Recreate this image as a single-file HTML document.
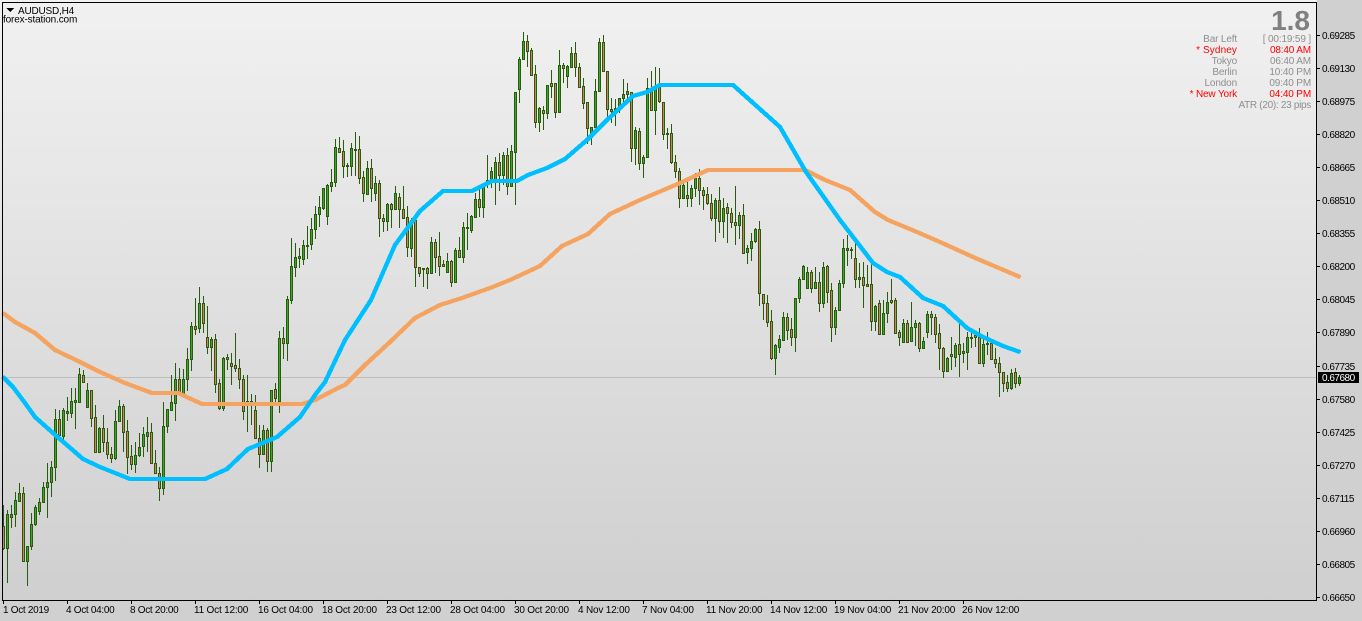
<!DOCTYPE html>
<html>
<head>
<meta charset="utf-8">
<style>
html,body{margin:0;padding:0;background:#d0d0d0;width:1362px;height:621px;overflow:hidden}
svg{display:block}
text{font-family:"Liberation Sans",sans-serif;font-size:10px}
.p{fill:#000;letter-spacing:-.5px}
.t{fill:#000;letter-spacing:-.2px}
.l{text-anchor:end;letter-spacing:-.15px}
.g{fill:#8e8e8e}
.r{fill:#ff0000}
</style>
</head>
<body>
<svg width="1362" height="621" viewBox="0 0 1362 621" xmlns="http://www.w3.org/2000/svg">
<defs>
<linearGradient id="bg" x1="0" y1="0" x2="0" y2="1">
<stop offset="0" stop-color="#f1f1f1"/>
<stop offset="1" stop-color="#cfcfcf"/>
</linearGradient>
<polyline id="oline" fill="none" stroke="#f4a460" stroke-width="3" points="3,313 15,322 35,333 55,350 80,362 100,372 125,383 152,393 178,393 202,404 302,404 315,400 340,387 345,385 365,365 390,342 415,318 440,305 462,298 490,288 510,280 540,266 562,246 588,234 610,214 640,200 680,183 708,170 805,170 825,180 850,190 875,212 888,220 917,232 940,242 973,257 1020,277"/>
<polyline id="bline" fill="none" stroke="#00bfff" stroke-width="3" points="3,377 13,387 25,403 35,417 53,433 83,459 100,467 130,479 205,479 227,469 248,449 277,437 300,417 315,395 325,382 345,340 371,300 395,245 420,211 443,191 472,191 492,181 517,181 528,175 547,168 565,159 587,140 607,120 633,96 647,92 660,85 733,85 780,127 806,172 840,220 873,263 887,272 900,277 923,298 943,306 967,328 983,337 1003,346 1020,352"/>
</defs>
<rect width="1362" height="621" fill="#d0d0d0"/>
<rect width="1317" height="601" fill="url(#bg)"/>
<rect x="3" y="377" width="1313" height="1" fill="#bdbdbd"/>

<g shape-rendering="crispEdges">
<path fill="none" stroke="#2a5a10" stroke-width="1" d="M3.5 505V550M7.5 510V583M11.5 505V528M15.5 492V527M19.5 483V502M23.5 487V562M27.5 546V586M31.5 513V550M35.5 505V526M39.5 498V515M43.5 482V503M47.5 463V518M51.5 461V497M55.5 409V481M59.5 410V440M63.5 408V444M67.5 397V421M71.5 388V418M75.5 388V429M79.5 368V402M83.5 370V383M87.5 383V407M91.5 390V427M95.5 405V453M99.5 427V453M103.5 415V452M107.5 428V459M111.5 447V463M115.5 410V460M119.5 400V422M123.5 404V452M127.5 420V474M131.5 445V470M135.5 442V473M139.5 433V457M143.5 427V457M147.5 417V452M151.5 423V463M155.5 450V473M159.5 467V501M163.5 402V495M167.5 409V433M171.5 375V410M175.5 363V421M179.5 368V395M183.5 369V395M187.5 348V391M191.5 322V371M195.5 298V335M199.5 287V333M203.5 296V333M207.5 306V354M211.5 337V371M215.5 334V393M219.5 379V410M223.5 357V411M227.5 354V370M231.5 353V385M235.5 333V372M239.5 359V389M243.5 375V420M247.5 375V432M251.5 394V425M255.5 395V438M259.5 425V468M263.5 425V455M267.5 428V472M271.5 390V472M275.5 383V403M279.5 331V413M283.5 327V359M287.5 296V361M291.5 238V304M295.5 243V277M299.5 248V268M303.5 240V265M307.5 226V259M311.5 218V250M315.5 206V239M319.5 196V227M323.5 188V210M327.5 184V225M331.5 169V192M335.5 139V187M339.5 137V152M343.5 140V178M347.5 163V177M351.5 143V176M355.5 132V176M359.5 136V184M363.5 171V202M367.5 161V195M371.5 159V202M375.5 176V201M379.5 180V237M383.5 214V232M387.5 203V231M391.5 203V228M395.5 186V210M399.5 193V228M403.5 186V218M407.5 206V257M411.5 218V257M415.5 218V287M419.5 267V277M423.5 268V287M427.5 267V289M431.5 237V273M435.5 239V273M439.5 232V276M443.5 260V266M447.5 253V273M451.5 260V287M455.5 248V282M459.5 237V257M463.5 222V263M467.5 213V250M471.5 215V233M475.5 193V217M479.5 188V217M483.5 183V218M487.5 155V188M491.5 167V188M495.5 157V205M499.5 153V191M503.5 152V185M507.5 148V195M511.5 145V186M515.5 92V205M519.5 57V103M523.5 32V59M527.5 35V67M531.5 48V76M535.5 65V128M539.5 107V132M543.5 106V130M547.5 85V119M551.5 70V98M555.5 83V118M559.5 50V112M563.5 63V83M567.5 65V88M571.5 47V67M575.5 42V77M579.5 63V88M583.5 78V109M587.5 102V144M591.5 127V145M595.5 79V127M599.5 38V91M603.5 35V71M607.5 71V120M611.5 98V123M615.5 99V126M619.5 98V113M623.5 79V102M627.5 83V100M631.5 92V162M635.5 127V165M639.5 128V170M643.5 155V178M647.5 78V157M651.5 71V110M655.5 67V135M659.5 68V103M663.5 102V140M667.5 128V149M671.5 124V164M675.5 155V178M679.5 168V208M683.5 182V199M687.5 182V207M691.5 185V207M695.5 173V197M699.5 169V205M703.5 187V210M707.5 187V205M711.5 194V221M715.5 198V242M719.5 187V233M723.5 198V238M727.5 203V243M731.5 208V228M735.5 186V245M739.5 212V239M743.5 204V254M747.5 245V264M751.5 233V261M755.5 228V243M759.5 221V306M763.5 294V320M767.5 295V327M771.5 310V360M775.5 344V375M779.5 335V353M783.5 312V341M787.5 313V340M791.5 318V346M795.5 298V352M799.5 277V303M803.5 265V280M807.5 267V289M811.5 270V293M815.5 267V289M819.5 272V312M823.5 262V308M827.5 265V303M831.5 283V342M835.5 307V335M839.5 280V311M843.5 239V288M847.5 235V266M851.5 247V259M855.5 240V288M859.5 263V288M863.5 262V308M867.5 265V286M871.5 263V331M875.5 305V331M879.5 300V335M883.5 300V335M887.5 292V323M891.5 279V304M895.5 298V333M899.5 330V346M903.5 319V342M907.5 320V343M911.5 302V342M915.5 320V346M919.5 322V352M923.5 337V349M927.5 311V338M931.5 311V335M935.5 314V343M939.5 324V370M943.5 347V378M947.5 357V372M951.5 337V370M955.5 343V367M959.5 323V377M963.5 343V363M967.5 332V370M971.5 328V348M975.5 332V347M979.5 328V363M983.5 337V367M987.5 332V355M991.5 342V360M995.5 348V368M999.5 357V397M1003.5 372V392M1007.5 375V392M1011.5 369V390M1015.5 368V388M1019.5 375V386"/>
<path fill="#3aa828" stroke="#2a5a10" stroke-width="1" d="M6.5 514.5h2V548.5h-2zM10.5 514.5h2V517.5h-2zM14.5 500.5h2V514.5h-2zM18.5 493.5h2V501.5h-2zM26.5 546.5h2V561.5h-2zM30.5 524.5h2V546.5h-2zM34.5 507.5h2V524.5h-2zM38.5 502.5h2V511.5h-2zM42.5 487.5h2V502.5h-2zM46.5 482.5h2V487.5h-2zM50.5 467.5h2V482.5h-2zM54.5 419.5h2V467.5h-2zM62.5 410.5h2V436.5h-2zM66.5 411.5h2V413.5h-2zM70.5 401.5h2V413.5h-2zM74.5 400.5h2V402.5h-2zM78.5 374.5h2V402.5h-2zM86.5 390.5h2V407.5h-2zM98.5 428.5h2V452.5h-2zM114.5 421.5h2V458.5h-2zM118.5 406.5h2V421.5h-2zM134.5 455.5h2V464.5h-2zM138.5 447.5h2V455.5h-2zM142.5 434.5h2V446.5h-2zM146.5 432.5h2V436.5h-2zM162.5 426.5h2V488.5h-2zM166.5 409.5h2V426.5h-2zM170.5 402.5h2V410.5h-2zM174.5 379.5h2V403.5h-2zM182.5 379.5h2V395.5h-2zM186.5 359.5h2V379.5h-2zM190.5 326.5h2V359.5h-2zM198.5 303.5h2V328.5h-2zM210.5 339.5h2V347.5h-2zM222.5 358.5h2V408.5h-2zM246.5 401.5h2V405.5h-2zM262.5 430.5h2V454.5h-2zM270.5 390.5h2V461.5h-2zM278.5 338.5h2V401.5h-2zM286.5 299.5h2V343.5h-2zM290.5 266.5h2V300.5h-2zM294.5 257.5h2V267.5h-2zM298.5 256.5h2V258.5h-2zM302.5 245.5h2V259.5h-2zM306.5 245.5h2V246.5h-2zM310.5 229.5h2V244.5h-2zM314.5 214.5h2V229.5h-2zM318.5 207.5h2V214.5h-2zM322.5 188.5h2V208.5h-2zM326.5 185.5h2V216.5h-2zM330.5 182.5h2V186.5h-2zM334.5 147.5h2V182.5h-2zM346.5 165.5h2V166.5h-2zM350.5 148.5h2V166.5h-2zM354.5 149.5h2V150.5h-2zM366.5 168.5h2V194.5h-2zM374.5 183.5h2V193.5h-2zM386.5 204.5h2V221.5h-2zM394.5 193.5h2V209.5h-2zM410.5 220.5h2V248.5h-2zM422.5 268.5h2V269.5h-2zM430.5 242.5h2V273.5h-2zM446.5 261.5h2V272.5h-2zM454.5 250.5h2V282.5h-2zM462.5 227.5h2V257.5h-2zM466.5 227.5h2V228.5h-2zM470.5 216.5h2V230.5h-2zM474.5 199.5h2V217.5h-2zM482.5 185.5h2V207.5h-2zM486.5 180.5h2V184.5h-2zM490.5 171.5h2V180.5h-2zM494.5 162.5h2V180.5h-2zM502.5 155.5h2V175.5h-2zM510.5 151.5h2V186.5h-2zM514.5 92.5h2V152.5h-2zM518.5 59.5h2V89.5h-2zM522.5 41.5h2V59.5h-2zM538.5 108.5h2V122.5h-2zM546.5 85.5h2V113.5h-2zM558.5 65.5h2V112.5h-2zM566.5 66.5h2V76.5h-2zM570.5 53.5h2V67.5h-2zM590.5 127.5h2V137.5h-2zM594.5 91.5h2V127.5h-2zM598.5 42.5h2V91.5h-2zM614.5 108.5h2V111.5h-2zM618.5 98.5h2V109.5h-2zM622.5 94.5h2V98.5h-2zM626.5 91.5h2V94.5h-2zM634.5 130.5h2V148.5h-2zM642.5 157.5h2V163.5h-2zM646.5 88.5h2V157.5h-2zM654.5 88.5h2V110.5h-2zM666.5 133.5h2V134.5h-2zM682.5 185.5h2V198.5h-2zM690.5 188.5h2V198.5h-2zM694.5 178.5h2V188.5h-2zM714.5 200.5h2V218.5h-2zM722.5 208.5h2V221.5h-2zM738.5 215.5h2V225.5h-2zM746.5 248.5h2V252.5h-2zM750.5 241.5h2V248.5h-2zM754.5 229.5h2V241.5h-2zM774.5 345.5h2V358.5h-2zM778.5 339.5h2V347.5h-2zM782.5 317.5h2V340.5h-2zM794.5 298.5h2V337.5h-2zM798.5 279.5h2V298.5h-2zM802.5 266.5h2V279.5h-2zM806.5 272.5h2V288.5h-2zM814.5 282.5h2V288.5h-2zM822.5 267.5h2V303.5h-2zM834.5 310.5h2V327.5h-2zM838.5 283.5h2V310.5h-2zM842.5 248.5h2V283.5h-2zM846.5 248.5h2V250.5h-2zM850.5 249.5h2V250.5h-2zM858.5 277.5h2V279.5h-2zM874.5 306.5h2V321.5h-2zM882.5 313.5h2V334.5h-2zM886.5 302.5h2V313.5h-2zM902.5 323.5h2V342.5h-2zM910.5 327.5h2V341.5h-2zM914.5 323.5h2V327.5h-2zM922.5 341.5h2V348.5h-2zM926.5 314.5h2V332.5h-2zM946.5 358.5h2V371.5h-2zM954.5 345.5h2V357.5h-2zM962.5 351.5h2V353.5h-2zM966.5 337.5h2V352.5h-2zM982.5 344.5h2V363.5h-2zM1010.5 373.5h2V388.5h-2zM1018.5 377.5h2V383.5h-2z"/>
<path fill="#cf8356" stroke="#2a5a10" stroke-width="1" d="M2.5 526.5h2V548.5h-2zM22.5 493.5h2V561.5h-2zM58.5 419.5h2V435.5h-2zM82.5 375.5h2V382.5h-2zM90.5 390.5h2V418.5h-2zM94.5 417.5h2V452.5h-2zM102.5 428.5h2V442.5h-2zM106.5 442.5h2V454.5h-2zM110.5 454.5h2V458.5h-2zM122.5 406.5h2V432.5h-2zM126.5 431.5h2V457.5h-2zM130.5 456.5h2V464.5h-2zM150.5 432.5h2V463.5h-2zM154.5 463.5h2V473.5h-2zM158.5 473.5h2V488.5h-2zM178.5 379.5h2V393.5h-2zM194.5 326.5h2V329.5h-2zM202.5 303.5h2V323.5h-2zM206.5 337.5h2V347.5h-2zM214.5 339.5h2V384.5h-2zM218.5 383.5h2V408.5h-2zM226.5 357.5h2V359.5h-2zM230.5 363.5h2V366.5h-2zM234.5 365.5h2V368.5h-2zM238.5 368.5h2V379.5h-2zM242.5 379.5h2V411.5h-2zM250.5 401.5h2V405.5h-2zM254.5 410.5h2V438.5h-2zM258.5 438.5h2V454.5h-2zM266.5 430.5h2V461.5h-2zM274.5 389.5h2V398.5h-2zM282.5 338.5h2V343.5h-2zM338.5 148.5h2V152.5h-2zM342.5 151.5h2V166.5h-2zM358.5 149.5h2V178.5h-2zM362.5 177.5h2V193.5h-2zM370.5 168.5h2V188.5h-2zM378.5 183.5h2V218.5h-2zM382.5 218.5h2V221.5h-2zM390.5 204.5h2V209.5h-2zM398.5 197.5h2V209.5h-2zM402.5 209.5h2V218.5h-2zM406.5 217.5h2V247.5h-2zM414.5 220.5h2V267.5h-2zM418.5 267.5h2V273.5h-2zM426.5 268.5h2V273.5h-2zM434.5 242.5h2V257.5h-2zM438.5 256.5h2V266.5h-2zM442.5 264.5h2V266.5h-2zM450.5 261.5h2V282.5h-2zM458.5 250.5h2V257.5h-2zM478.5 199.5h2V207.5h-2zM498.5 162.5h2V175.5h-2zM506.5 155.5h2V186.5h-2zM526.5 41.5h2V51.5h-2zM530.5 50.5h2V75.5h-2zM534.5 74.5h2V122.5h-2zM542.5 110.5h2V113.5h-2zM550.5 83.5h2V86.5h-2zM554.5 83.5h2V112.5h-2zM562.5 65.5h2V68.5h-2zM574.5 53.5h2V67.5h-2zM578.5 67.5h2V87.5h-2zM582.5 86.5h2V103.5h-2zM586.5 102.5h2V128.5h-2zM602.5 42.5h2V71.5h-2zM606.5 71.5h2V109.5h-2zM610.5 109.5h2V111.5h-2zM630.5 92.5h2V148.5h-2zM638.5 131.5h2V163.5h-2zM650.5 89.5h2V110.5h-2zM658.5 87.5h2V101.5h-2zM662.5 102.5h2V134.5h-2zM670.5 133.5h2V162.5h-2zM674.5 162.5h2V171.5h-2zM678.5 171.5h2V198.5h-2zM686.5 195.5h2V198.5h-2zM698.5 178.5h2V190.5h-2zM702.5 190.5h2V195.5h-2zM706.5 194.5h2V203.5h-2zM710.5 203.5h2V218.5h-2zM718.5 200.5h2V221.5h-2zM726.5 207.5h2V213.5h-2zM730.5 213.5h2V222.5h-2zM734.5 222.5h2V225.5h-2zM742.5 215.5h2V253.5h-2zM758.5 229.5h2V293.5h-2zM762.5 294.5h2V303.5h-2zM766.5 303.5h2V322.5h-2zM770.5 321.5h2V358.5h-2zM786.5 317.5h2V330.5h-2zM790.5 329.5h2V337.5h-2zM810.5 272.5h2V288.5h-2zM818.5 282.5h2V303.5h-2zM826.5 266.5h2V292.5h-2zM830.5 290.5h2V327.5h-2zM854.5 258.5h2V279.5h-2zM862.5 277.5h2V285.5h-2zM866.5 284.5h2V286.5h-2zM870.5 284.5h2V321.5h-2zM878.5 303.5h2V334.5h-2zM890.5 300.5h2V302.5h-2zM894.5 300.5h2V333.5h-2zM898.5 332.5h2V337.5h-2zM906.5 323.5h2V342.5h-2zM918.5 323.5h2V348.5h-2zM930.5 314.5h2V317.5h-2zM934.5 317.5h2V334.5h-2zM938.5 333.5h2V348.5h-2zM942.5 348.5h2V371.5h-2zM950.5 354.5h2V356.5h-2zM958.5 344.5h2V354.5h-2zM970.5 337.5h2V338.5h-2zM974.5 335.5h2V337.5h-2zM978.5 337.5h2V363.5h-2zM986.5 343.5h2V344.5h-2zM990.5 343.5h2V359.5h-2zM994.5 359.5h2V363.5h-2zM998.5 363.5h2V372.5h-2zM1002.5 372.5h2V383.5h-2zM1006.5 382.5h2V388.5h-2zM1014.5 372.5h2V383.5h-2z"/>

<use href="#oline" x="-.5" y="-.5"/><use href="#oline" x=".5" y="-.5"/><use href="#oline" x="-.5" y=".5"/><use href="#oline" x=".5" y=".5"/>
<use href="#bline" x="-.5" y="-.5"/><use href="#bline" x=".5" y="-.5"/><use href="#bline" x="-.5" y=".5"/><use href="#bline" x=".5" y=".5"/>

<path fill="none" stroke="#000" stroke-width="1" d="M2.5 2.5H1316.5V600.5H2.5Z"/>
<path fill="none" stroke="#000" stroke-width="1" d="M1316 35.5h4M1316 68.5h4M1316 101.5h4M1316 134.5h4M1316 167.5h4M1316 200.5h4M1316 233.5h4M1316 266.5h4M1316 299.5h4M1316 332.5h4M1316 366.5h4M1316 399.5h4M1316 432.5h4M1316 465.5h4M1316 498.5h4M1316 531.5h4M1316 564.5h4M1316 597.5h4"/>
<path fill="none" stroke="#000" stroke-width="1" d="M3.5 600v4M67.5 600v4M131.5 600v4M195.5 600v4M259.5 600v4M323.5 600v4M387.5 600v4M451.5 600v4M515.5 600v4M579.5 600v4M643.5 600v4M707.5 600v4M771.5 600v4M835.5 600v4M899.5 600v4M963.5 600v4"/>
<rect x="1318" y="372" width="41" height="11" fill="#000"/>
<path fill="#000" d="M6 8h8l-4 4z"/>
</g>

<text x="18" y="14" class="t">AUDUSD,H4</text>
<text x="3" y="22.500" class="t" style="letter-spacing:-.15px">forex-station.com</text>

<text x="1310" y="30" text-anchor="end" style="font-size:28px;font-weight:bold;fill:#808080">1.8</text>
<text x="1237" y="42" class="l g">Bar Left</text>
<text x="1311" y="42" class="l g">[ 00:19:59 ]</text>
<text x="1237" y="53" class="l r" style="letter-spacing:.1px">* Sydney</text>
<text x="1311" y="53" class="l r">08:40 AM</text>
<text x="1237" y="64" class="l g">Tokyo</text>
<text x="1311" y="64" class="l g">06:40 AM</text>
<text x="1237" y="75" class="l g">Berlin</text>
<text x="1311" y="75" class="l g">10:40 PM</text>
<text x="1237" y="86" class="l g">London</text>
<text x="1311" y="86" class="l g">09:40 PM</text>
<text x="1237" y="97" class="l r">* New York</text>
<text x="1311" y="97" class="l r">04:40 PM</text>
<text x="1311" y="108" class="l g" style="letter-spacing:-.3px">ATR (20): 23 pips</text>

<text x="1322" y="39" class="p">0.69285</text>
<text x="1322" y="72" class="p">0.69130</text>
<text x="1322" y="105" class="p">0.68975</text>
<text x="1322" y="138" class="p">0.68820</text>
<text x="1322" y="171" class="p">0.68665</text>
<text x="1322" y="204" class="p">0.68510</text>
<text x="1322" y="237" class="p">0.68355</text>
<text x="1322" y="270" class="p">0.68200</text>
<text x="1322" y="303" class="p">0.68045</text>
<text x="1322" y="336" class="p">0.67890</text>
<text x="1322" y="370" class="p">0.67735</text>
<text x="1322" y="381" class="p" style="fill:#fff">0.67680</text>
<text x="1322" y="403" class="p">0.67580</text>
<text x="1322" y="436" class="p">0.67425</text>
<text x="1322" y="469" class="p">0.67270</text>
<text x="1322" y="502" class="p">0.67115</text>
<text x="1322" y="535" class="p">0.66960</text>
<text x="1322" y="568" class="p">0.66805</text>
<text x="1322" y="601" class="p">0.66650</text>

<text x="3" y="613" class="t" style="letter-spacing:-.3px">1 Oct 2019</text>
<text x="66" y="613" class="t" style="letter-spacing:-.3px">4 Oct 04:00</text>
<text x="130" y="613" class="t" style="letter-spacing:-.3px">8 Oct 20:00</text>
<text x="194" y="613" class="t">11 Oct 12:00</text>
<text x="258" y="613" class="t">16 Oct 04:00</text>
<text x="322" y="613" class="t">18 Oct 20:00</text>
<text x="386" y="613" class="t">23 Oct 12:00</text>
<text x="450" y="613" class="t">28 Oct 04:00</text>
<text x="514" y="613" class="t">30 Oct 20:00</text>
<text x="578" y="613" class="t">4 Nov 12:00</text>
<text x="642" y="613" class="t">7 Nov 04:00</text>
<text x="706" y="613" class="t">11 Nov 20:00</text>
<text x="770" y="613" class="t">14 Nov 12:00</text>
<text x="834" y="613" class="t">19 Nov 04:00</text>
<text x="898" y="613" class="t">21 Nov 20:00</text>
<text x="962" y="613" class="t">26 Nov 12:00</text>
</svg>
</body>
</html>
